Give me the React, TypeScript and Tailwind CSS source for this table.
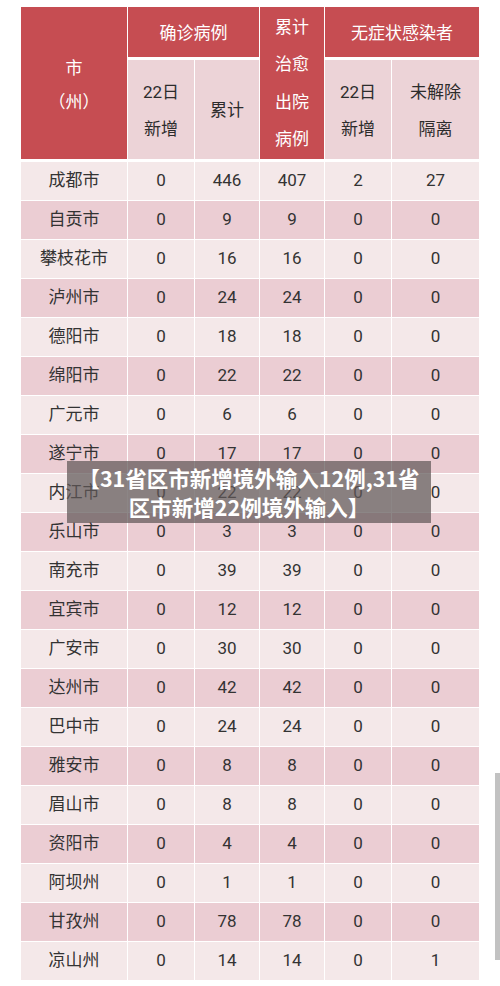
import React from "react";

const rows: [string, number, number, number, number, number][] = [
  ["成都市", 0, 446, 407, 2, 27],
  ["自贡市", 0, 9, 9, 0, 0],
  ["攀枝花市", 0, 16, 16, 0, 0],
  ["泸州市", 0, 24, 24, 0, 0],
  ["德阳市", 0, 18, 18, 0, 0],
  ["绵阳市", 0, 22, 22, 0, 0],
  ["广元市", 0, 6, 6, 0, 0],
  ["遂宁市", 0, 17, 17, 0, 0],
  ["内江市", 0, 22, 22, 0, 0],
  ["乐山市", 0, 3, 3, 0, 0],
  ["南充市", 0, 39, 39, 0, 0],
  ["宜宾市", 0, 12, 12, 0, 0],
  ["广安市", 0, 30, 30, 0, 0],
  ["达州市", 0, 42, 42, 0, 0],
  ["巴中市", 0, 24, 24, 0, 0],
  ["雅安市", 0, 8, 8, 0, 0],
  ["眉山市", 0, 8, 8, 0, 0],
  ["资阳市", 0, 4, 4, 0, 0],
  ["阿坝州", 0, 1, 1, 0, 0],
  ["甘孜州", 0, 78, 78, 0, 0],
  ["凉山州", 0, 14, 14, 0, 1],
];

const font = { fontFamily: 'Roboto, "Noto Sans CJK SC", sans-serif' };

export default function App() {
  return (
    <div className="relative w-[500px] h-[986px] bg-white overflow-hidden" style={font}>
      <div className="pt-[7px] pl-[21px]">
        {/* header */}
        <div className="grid grid-cols-[106px_66px_64px_64px_66px_87px] grid-rows-[50px_99px] gap-x-[1px] gap-y-[3px] text-[17px]">
          <div className="row-span-2 bg-[#c64d52] text-white flex flex-col items-center justify-center leading-[34px] pt-[4px]">
            <span>市</span>
            <span>（州）</span>
          </div>
          <div className="col-span-2 bg-[#c64d52] text-white flex items-center justify-center pt-[4px]">
            确诊病例
          </div>
          <div className="row-span-2 bg-[#c64d52] text-white flex flex-col items-center justify-center leading-[37.5px] pt-[1px]">
            <span>累计</span>
            <span>治愈</span>
            <span>出院</span>
            <span>病例</span>
          </div>
          <div className="col-span-2 bg-[#c64d52] text-white flex items-center justify-center pt-[4px]">
            无症状感染者
          </div>
          <div className="bg-[#ecd3d7] text-[#2c2c2c] flex flex-col items-center justify-center leading-[37px] pt-[2px]">
            <span>22日</span>
            <span>新增</span>
          </div>
          <div className="bg-[#ecd3d7] text-[#2c2c2c] flex items-center justify-center pt-[2px]">累计</div>
          <div className="bg-[#ecd3d7] text-[#2c2c2c] flex flex-col items-center justify-center leading-[37px] pt-[2px]">
            <span>22日</span>
            <span>新增</span>
          </div>
          <div className="bg-[#ecd3d7] text-[#2c2c2c] flex flex-col items-center justify-center leading-[37px] pt-[2px]">
            <span>未解除</span>
            <span>隔离</span>
          </div>
        </div>

        {/* body */}
        <div className="mt-[3px] flex flex-col gap-y-[1px] text-[17px] text-[#333]">
          {rows.map((r, i) => (
            <div
              key={r[0]}
              className="grid grid-cols-[106px_66px_64px_64px_66px_87px] gap-x-[1px] h-[38px]"
            >
              {r.map((c, j) => (
                <div
                  key={j}
                  className={
                    "flex items-center justify-center " +
                    (i % 2 === 0 ? "bg-[#f4e8e9]" : "bg-[#ebcdd3]")
                  }
                >
                  {c}
                </div>
              ))}
            </div>
          ))}
        </div>
      </div>

      {/* title banner over the table */}
      <div
        className="absolute left-[67px] top-[461px] w-[364px] h-[62px] bg-[rgba(95,88,88,0.72)] flex items-center justify-center"
        style={{ fontFamily: '"Noto Sans CJK SC", sans-serif' }}
      >
        <p className="text-white font-bold text-[21.5px] leading-[29px] text-center whitespace-nowrap">
          【31省区市新增境外输入12例,31省
          <br />
          区市新增22例境外输入】
        </p>
      </div>

      {/* scrollbar */}
      <div className="absolute left-[495px] top-[773px] w-[5px] h-[187px] bg-[#c2c2c2]" />
    </div>
  );
}
